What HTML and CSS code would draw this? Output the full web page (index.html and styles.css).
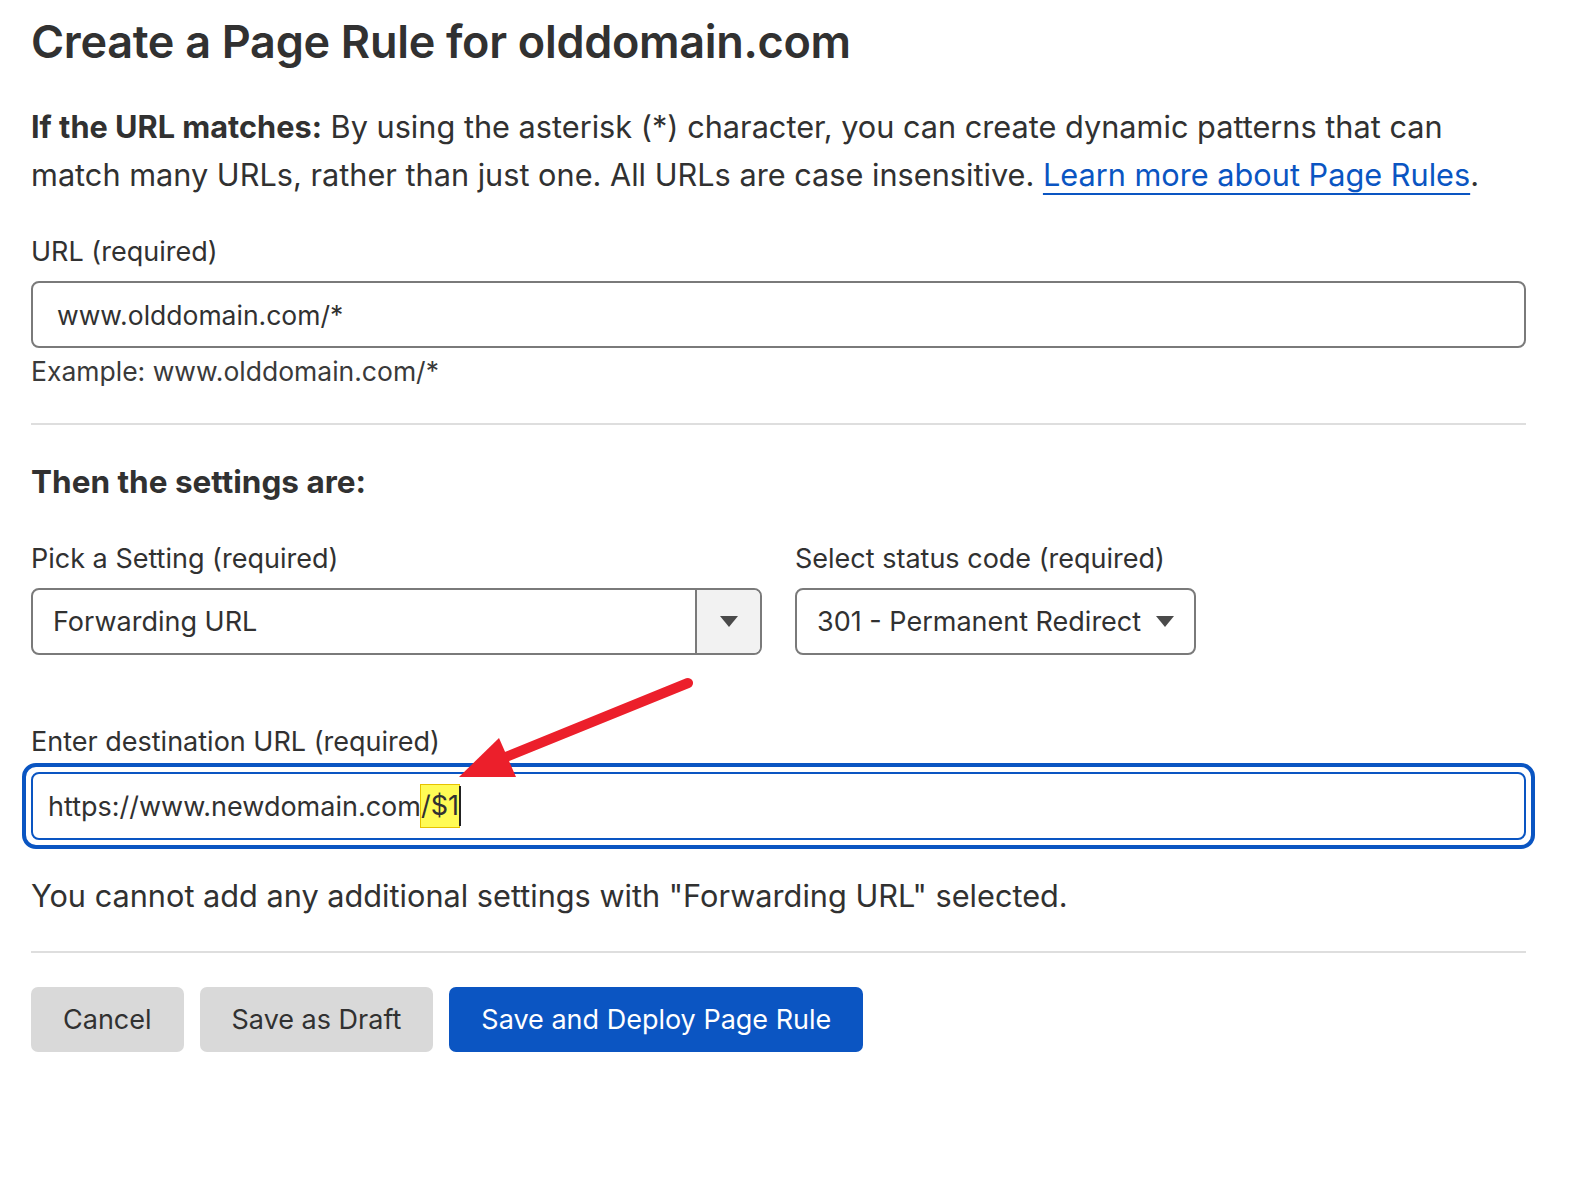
FILE: index.html
```html
<!DOCTYPE html>
<html>
<head>
<meta charset="utf-8">
<link rel="stylesheet" href="styles.css">
</head>
<body>
<div class="page">
  <h1 class="title">Create a Page Rule for olddomain.com</h1>
  <p class="intro"><strong>If the URL matches:</strong> By using the asterisk (*) character, you can create dynamic patterns that can match many URLs, rather than just one. All URLs are case insensitive. <a class="link" href="#">Learn more about Page Rules</a>.</p>

  <div class="field field-url">
    <label class="label">URL (required)</label>
    <div class="input"><span class="input-text">www.olddomain.com/*</span></div>
    <div class="help">Example: www.olddomain.com/*</div>
  </div>

  <hr class="divider divider-1">

  <h2 class="subtitle">Then the settings are:</h2>

  <div class="row">
    <div class="col col-setting">
      <label class="label">Pick a Setting (required)</label>
      <div class="select">
        <span class="select-value">Forwarding URL</span>
        <span class="select-btn"><span class="caret"></span></span>
      </div>
    </div>
    <div class="col col-status">
      <label class="label">Select status code (required)</label>
      <div class="select2">
        <span class="select2-value">301 - Permanent Redirect</span>
        <span class="caret"></span>
      </div>
    </div>
  </div>

  <div class="field dest">
    <label class="label">Enter destination URL (required)</label>
    <div class="focus-ring">
      <div class="input input-focus"><span class="input-text">https://www.newdomain.com<mark class="hl">/$1</mark><span class="cursor"></span></span></div>
    </div>
  </div>

  <p class="note">You cannot add any additional settings with "Forwarding URL" selected.</p>

  <hr class="divider divider-2">

  <div class="actions">
    <button class="btn btn-gray">Cancel</button>
    <button class="btn btn-gray">Save as Draft</button>
    <button class="btn btn-blue">Save and Deploy Page Rule</button>
  </div>

  <svg class="arrow" width="260" height="130" viewBox="0 0 260 130">
    <line x1="248" y1="23" x2="66" y2="97" stroke="#ec1f2b" stroke-width="10" stroke-linecap="round"/>
    <polygon points="19,117 59,78 76,117" fill="#ec1f2b"/>
  </svg>
</div>
</body>
</html>
```

FILE: styles.css
```css
* { box-sizing: border-box; }
html, body { margin: 0; padding: 0; background: #fff; }
body {
  font-family: Inter, "Noto Sans", "Liberation Sans", sans-serif;
  color: #313131;
}
.page {
  position: relative;
  padding: 14px 46px 0 31px;
  width: 1572px;
  height: 1190px;
}
.title {
  font-size: 45px;
  font-weight: 600;
  margin: 0;
  line-height: 56px;
  letter-spacing: -0.3px;
}
.intro {
  font-size: 30.7px;
  line-height: 48px;
  margin: 33px 0 0 0;
}
.intro strong { font-weight: 700; }
.link {
  color: #0a55c2;
  text-decoration: underline;
  text-underline-offset: 7px;
  text-decoration-thickness: 2px;
}
.field { position: relative; }
.label {
  display: block;
  font-size: 27px;
  line-height: 34px;
}
.field-url { margin-top: 36px; }
.field-url .label { margin-bottom: 12px; }
.input {
  height: 67px;
  border: 2px solid #7a7a7a;
  border-radius: 8px;
  display: flex;
  align-items: center;
  padding-left: 24px;
  font-size: 26.5px;
  background: #fff;
}
.help {
  font-size: 26.5px;
  line-height: 34px;
  margin-top: 6px;
  color: #3a3a3a;
}
.divider {
  border: 0;
  border-top: 2px solid #dedede;
  margin: 0;
}
.divider-1 { margin-top: 35px; }
.subtitle {
  font-size: 31.5px;
  font-weight: 700;
  margin: 37px 0 0 0;
  line-height: 40px;
}
.row {
  display: flex;
  gap: 33px;
  margin-top: 40px;
}
.row .label { margin-bottom: 12px; }
.col-setting { width: 731px; }
.select {
  height: 67px;
  border: 2px solid #7a7a7a;
  border-radius: 8px;
  display: flex;
  overflow: hidden;
  font-size: 27px;
}
.select-value {
  flex: 1;
  display: flex;
  align-items: center;
  padding-left: 20px;
}
.select-btn {
  width: 65px;
  border-left: 2px solid #7a7a7a;
  background: #f2f2f2;
  display: flex;
  align-items: center;
  justify-content: center;
}
.caret {
  width: 0; height: 0;
  border-left: 9px solid transparent;
  border-right: 9px solid transparent;
  border-top: 11px solid #4a4a4a;
}
.select2 {
  width: 401px;
  height: 67px;
  border: 2px solid #7a7a7a;
  border-radius: 8px;
  display: flex;
  align-items: center;
  padding-left: 20px;
  padding-right: 20px;
  font-size: 27px;
  gap: 8px;
}
.select2-value { flex: 1; white-space: nowrap; }
.dest { margin-top: 70px; }
.dest .label { margin-bottom: 4px; }
.focus-ring {
  margin: 0 -9px 0 -9px;
  padding: 5px;
  border: 4px solid #0a55c2;
  border-radius: 14px;
}
.input-focus {
  border: 2px solid #0a55c2;
  padding-left: 15px;
  height: 68px;
  font-size: 27px;
}
.input-text { display: inline-flex; align-items: center; white-space: nowrap; }
.hl {
  background: #fffb55;
  outline: 1px solid #e6c200;
  color: #313131;
  padding: 5px 0;
  line-height: 32px;
}
.cursor {
  display: inline-block;
  width: 2px;
  height: 40px;
  background: #222;
}
.arrow {
  position: absolute;
  left: 440px;
  top: 660px;
}
.note {
  font-size: 30.7px;
  line-height: 40px;
  margin: 27px 0 0 0;
}
.divider-2 { margin-top: 35px; }
.actions {
  display: flex;
  gap: 16px;
  margin-top: 34px;
}
.btn {
  font-family: inherit;
  font-size: 27px;
  height: 65px;
  border: 0;
  border-radius: 7px;
  padding: 0 32px;
}
.btn-gray { background: #d9d9d9; color: #313131; }
.btn-blue { background: #0b55c2; color: #fff; }
```
